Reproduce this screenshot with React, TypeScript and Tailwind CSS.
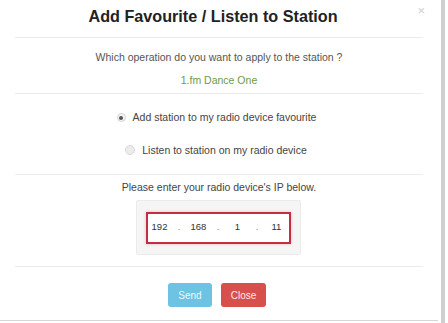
import React, { useState } from "react";

const App: React.FC = () => {
  const [mode, setMode] = useState<"fav" | "listen">("fav");
  const [ip, setIp] = useState<string[]>(["192", "168", "1", "11"]);

  return (
    <div
      className="w-[448px] h-[323px] bg-white flex overflow-hidden"
      style={{ fontFamily: '"Liberation Sans", Arial, sans-serif' }}
    >
      <div className="w-[438px] flex flex-col border-b border-[#d6d6d6] h-[321px]">
        {/* header */}
        <div className="relative h-[38px] mx-[15px] border-b border-[#ececec] flex items-start justify-center">
          <h1 className="mt-[7px] mr-[12px] text-[16.2px] leading-[19px] font-bold text-[#222]">
            Add Favourite / Listen to Station
          </h1>
          <span className="absolute right-[-2px] top-[1px] text-[13px] text-[#cfcfcf]">×</span>
        </div>

        {/* question */}
        <p className="mt-[12px] text-center text-[10.5px] leading-[14px] text-[#555]">
          Which operation do you want to apply to the station ?
        </p>
        <p className="mt-[9px] text-center text-[10.5px] leading-[14px] text-[#6d9a45]">1.fm Dance One</p>

        {/* options */}
        <div className="mt-[6px] mx-[15px] h-[82px] border-y border-[#ececec] flex flex-col items-center justify-center gap-[17px] text-[10.5px] text-[#444]">
          <label className="flex items-center gap-[7px] ml-[-5px] cursor-pointer" onClick={() => setMode("fav")}>
            <span className="w-[9px] h-[9px] rounded-full border border-[#d4d4d4] bg-[#f4f4f4] flex items-center justify-center">
              {mode === "fav" && <span className="w-[4px] h-[4px] rounded-full bg-[#555]" />}
            </span>
            Add station to my radio device favourite
          </label>
          <label className="flex items-center gap-[7px] ml-[-6px] cursor-pointer" onClick={() => setMode("listen")}>
            <span className="w-[10px] h-[10px] rounded-full border border-[#d8d8d8] bg-[#ececec] flex items-center justify-center">
              {mode === "listen" && <span className="w-[4px] h-[4px] rounded-full bg-[#555]" />}
            </span>
            Listen to station on my radio device
          </label>
        </div>

        {/* ip */}
        <p className="mt-[5px] text-center text-[10.5px] leading-[14px] text-[#444]">
          Please enter your radio device's IP below.
        </p>
        <div className="mt-[6px] self-center ml-[-2px] w-[165px] h-[55px] bg-[#f4f5f4] border border-[#ebebeb] rounded-[2px] flex items-center justify-center">
          <div className="w-[145px] h-[32px] border-2 border-[#c22f42] bg-white shadow-[0_0_3px_#f3b6be] flex items-center justify-between text-[9.5px] text-[#333]">
            {ip.map((v, i) => (
              <React.Fragment key={i}>
                <input
                  value={v}
                  onChange={(e) => setIp(ip.map((x, j) => (j === i ? e.target.value : x)))}
                  className="w-[24px] text-center outline-none bg-transparent"
                />
                {i < 3 && <span className="text-[#777]">.</span>}
              </React.Fragment>
            ))}
          </div>
        </div>

        {/* footer */}
        <div className="mt-[11px] mx-[15px] border-t border-[#ececec] flex-1 flex items-start justify-center gap-[9px] pt-[16px] pr-[4px]">
          <button className="w-[44px] h-[24px] rounded-[3px] bg-[#6cc3e4] text-[#eef8fc] text-[10px]">Send</button>
          <button className="w-[45px] h-[24px] rounded-[3px] bg-[#d8504c] text-[#fbeaea] text-[10px]">Close</button>
        </div>
      </div>
      <div className="ml-[3px] w-[4px] h-full bg-[#cfcfcf]" />
    </div>
  );
};

export default App;
